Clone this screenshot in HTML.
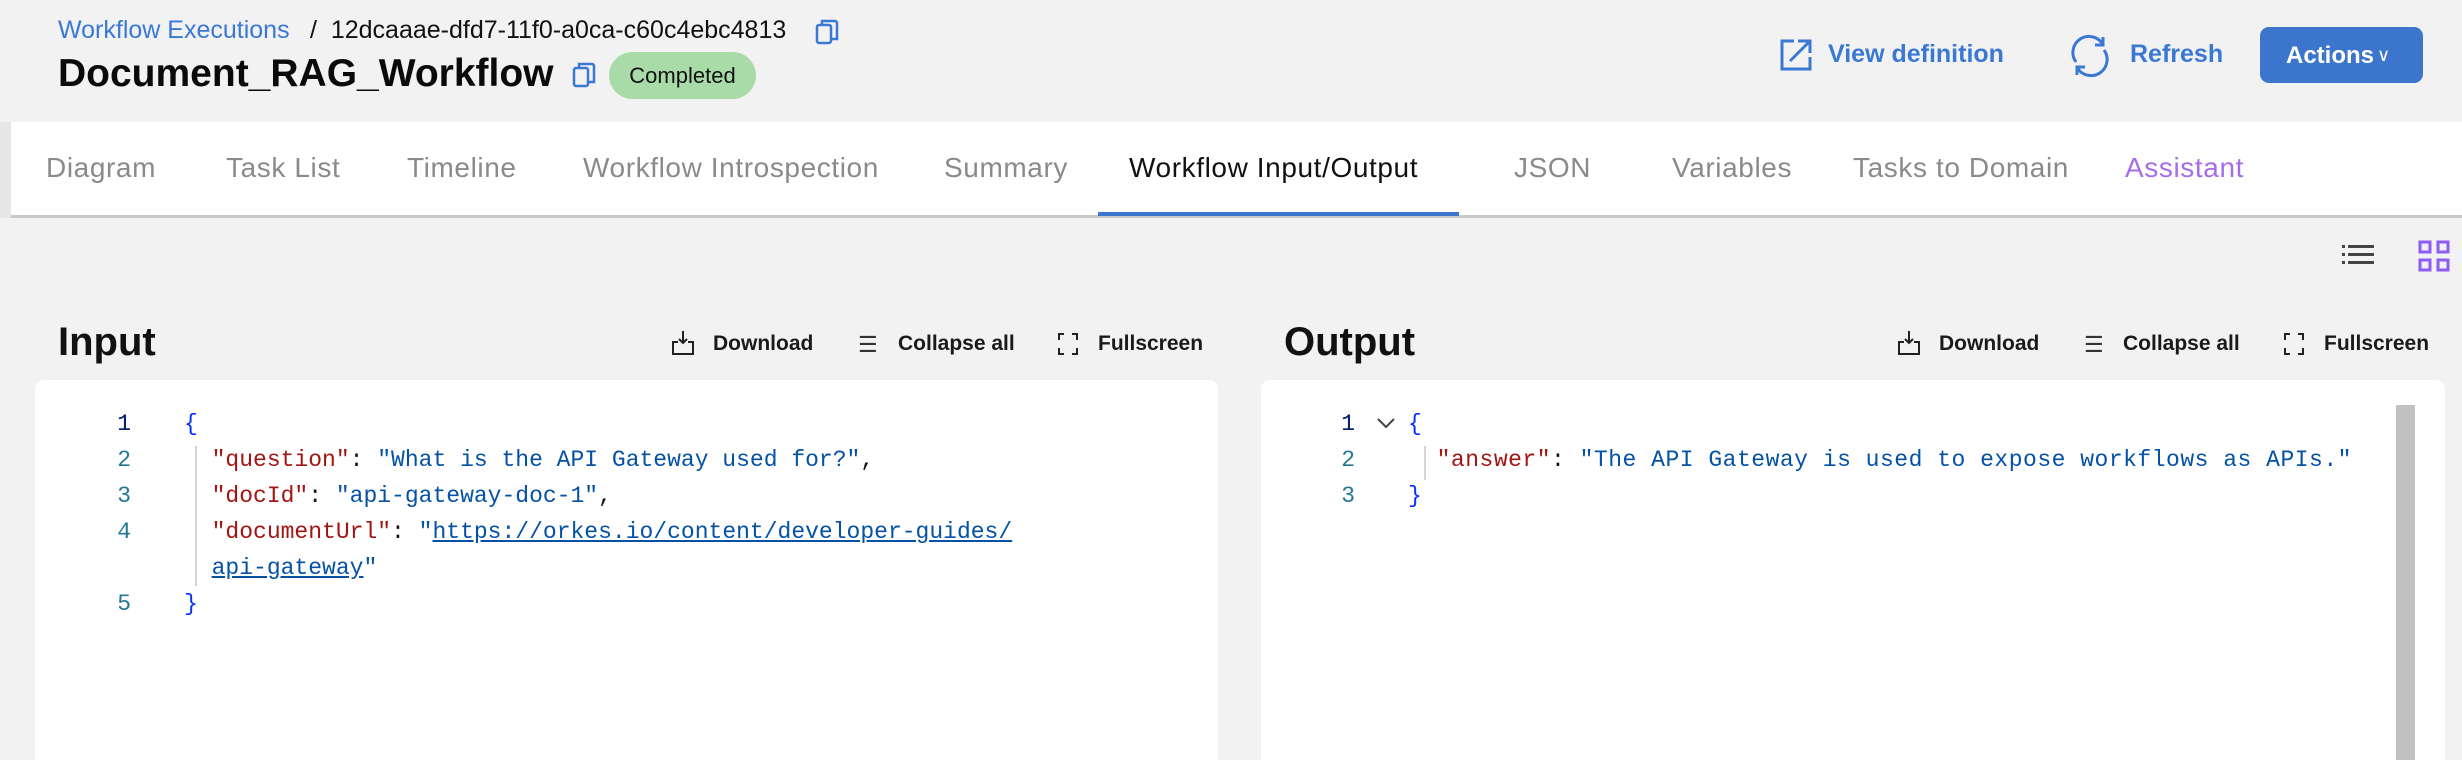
<!DOCTYPE html>
<html><head><meta charset="utf-8"><style>
*{margin:0;padding:0;box-sizing:border-box}
html,body{width:2462px;height:760px;overflow:hidden}
body{background:#f2f2f2;font-family:"Liberation Sans",sans-serif;position:relative;color:#111}
.a{position:absolute;white-space:nowrap}
.tab{position:absolute;top:152px;font-size:28px;letter-spacing:0.6px;color:#8a8a8a}
.tb{position:absolute;top:332px;font-size:21px;font-weight:bold;color:#1a1a1a}
.panel{position:absolute;top:380px;height:380px;background:#fff;border-radius:9px 9px 0 0}
.code{position:absolute;font-family:"Liberation Mono",monospace;font-size:23px;line-height:36px;white-space:pre}
.ln{color:#237893;text-align:right;width:40px}
.k{color:#a31515}.s{color:#0451a5}.b{color:#0431fa}
</style></head><body>
<div class="a" style="left:58px;top:16px;font-size:25px;color:#3a78d4">Workflow Executions</div>
<div class="a" style="left:310px;top:16px;font-size:25px;color:#111">/&nbsp;&nbsp;12dcaaae-dfd7-11f0-a0ca-c60c4ebc4813</div>
<svg class="a" style="left:813px;top:18px" width="30" height="30" viewBox="0 0 30 30" fill="none" stroke="#3a78d4" stroke-width="2.5"><rect x="4" y="7" width="14" height="18" rx="2"/><path d="M9 7V3h13a2 2 0 0 1 2 2v16h-6"/></svg>
<div class="a" style="left:58px;top:52px;font-size:39px;font-weight:bold;color:#0a0a0a">Document_RAG_Workflow</div>
<svg class="a" style="left:570px;top:61px" width="30" height="30" viewBox="0 0 30 30" fill="none" stroke="#3a78d4" stroke-width="2.5"><rect x="4" y="7" width="14" height="18" rx="2"/><path d="M9 7V3h13a2 2 0 0 1 2 2v16h-6"/></svg>
<div class="a" style="left:609px;top:52px;width:147px;height:47px;border-radius:24px;background:#a8dba8;font-size:22px;text-align:center;line-height:47px;color:#111">Completed</div>

<svg class="a" style="left:1778px;top:37px" width="36" height="36" viewBox="0 0 36 36" fill="none" stroke="#3a78d4" stroke-width="3"><path d="M16 4H4v28h28V20"/><path d="M12 24L31 5M20 4h12v12" /></svg>
<div class="a" style="left:1828px;top:40px;font-size:25px;font-weight:bold;color:#3a78d4">View definition</div>
<svg class="a" style="left:2068px;top:34px" width="44" height="44" viewBox="0 0 44 44" fill="none" stroke="#3a78d4" stroke-width="3"><path d="M8 28A15 15 0 0 1 34 9"/><path d="M36 16A15 15 0 0 1 10 35"/><path d="M35 3v8h-8M9 41v-8h8"/></svg>
<div class="a" style="left:2130px;top:40px;font-size:25px;font-weight:bold;color:#3a78d4">Refresh</div>
<div class="a" style="left:2260px;top:27px;width:163px;height:56px;border-radius:9px;background:#3b76cc;color:#fff;font-size:24px;font-weight:bold;line-height:56px;padding-left:26px">Actions<span style="font-size:18px;font-weight:normal;margin-left:3px;vertical-align:2px">∨</span></div>

<div class="a" style="left:11px;top:122px;width:2451px;height:96px;background:#fff;border-bottom:3px solid #c8c8c8"></div>
<div class="a" style="left:0;top:122px;width:11px;height:96px;background:#e6e6e6"></div>
<div class="tab" style="left:46px">Diagram</div>
<div class="tab" style="left:226px">Task List</div>
<div class="tab" style="left:407px">Timeline</div>
<div class="tab" style="left:583px">Workflow Introspection</div>
<div class="tab" style="left:944px">Summary</div>
<div class="tab" style="left:1129px;color:#111">Workflow Input/Output</div>
<div class="tab" style="left:1514px">JSON</div>
<div class="tab" style="left:1672px">Variables</div>
<div class="tab" style="left:1853px">Tasks to Domain</div>
<div class="tab" style="left:2125px;color:#a56ee8">Assistant</div>
<div class="a" style="left:1098px;top:212px;width:361px;height:4px;background:#3b76cc"></div>

<svg class="a" style="left:2342px;top:244px" width="32" height="22" viewBox="0 0 32 22" fill="#444"><rect x="0" y="1" width="3" height="3"/><rect x="6" y="1" width="26" height="3"/><rect x="0" y="9" width="3" height="3"/><rect x="6" y="9" width="26" height="3"/><rect x="0" y="17" width="3" height="3"/><rect x="6" y="17" width="26" height="3"/></svg>
<svg class="a" style="left:2418px;top:240px" width="32" height="32" viewBox="0 0 32 32" fill="none" stroke="#8b5cf6" stroke-width="3"><rect x="2" y="2" width="10" height="10"/><rect x="20" y="2" width="10" height="10"/><rect x="2" y="20" width="10" height="10"/><rect x="20" y="20" width="10" height="10"/></svg>

<div class="a" style="left:58px;top:320px;font-size:40px;font-weight:bold">Input</div>
<div class="a" style="left:1284px;top:320px;font-size:40px;font-weight:bold">Output</div>

<svg class="a" style="left:671px;top:330px" width="24" height="26" viewBox="0 0 24 26" fill="none" stroke="#222" stroke-width="2"><path d="M12 1v12M8 9l4 4 4-4M7 12H2v12h20V12h-5"/></svg>
<div class="tb" style="left:713px">Download</div>
<div class="a" style="left:858px;top:332px;font-size:22px;color:#333">☰</div>
<div class="tb" style="left:898px">Collapse all</div>
<svg class="a" style="left:1058px;top:333px" width="20" height="22" viewBox="0 0 20 22" fill="none" stroke="#222" stroke-width="2"><path d="M1 7V1h5M14 1h5v6M19 15v6h-5M6 21H1v-6"/></svg>
<div class="tb" style="left:1098px">Fullscreen</div>

<svg class="a" style="left:1897px;top:330px" width="24" height="26" viewBox="0 0 24 26" fill="none" stroke="#222" stroke-width="2"><path d="M12 1v12M8 9l4 4 4-4M7 12H2v12h20V12h-5"/></svg>
<div class="tb" style="left:1939px">Download</div>
<div class="a" style="left:2084px;top:332px;font-size:22px;color:#333">☰</div>
<div class="tb" style="left:2123px">Collapse all</div>
<svg class="a" style="left:2284px;top:333px" width="20" height="22" viewBox="0 0 20 22" fill="none" stroke="#222" stroke-width="2"><path d="M1 7V1h5M14 1h5v6M19 15v6h-5M6 21H1v-6"/></svg>
<div class="tb" style="left:2324px">Fullscreen</div>

<div class="panel" style="left:35px;width:1183px"></div>
<div class="panel" style="left:1261px;width:1184px"></div>

<div class="code ln" style="left:91px;top:406px">1
2
3
4

5</div>
<div class="code ln" style="left:91px;top:406px;color:#0b216f">1</div>
<div class="a" style="left:195px;top:446px;width:2px;height:140px;background:#d4d4d4"></div>
<div class="code" style="left:184px;top:406px"><span class="b">{</span>
  <span class="k">"question"</span>: <span class="s">"What is the API Gateway used for?"</span>,
  <span class="k">"docId"</span>: <span class="s">"api-gateway-doc-1"</span>,
  <span class="k">"documentUrl"</span>: <span class="s">"<u>https://orkes.io/content/developer-guides/</u></span>
  <span class="s"><u>api-gateway</u>"</span>
<span class="b">}</span></div>

<div class="code ln" style="left:1315px;top:406px">1
2
3</div>
<div class="code ln" style="left:1315px;top:406px;color:#0b216f">1</div>
<svg class="a" style="left:1376px;top:415px" width="20" height="16" viewBox="0 0 20 16" fill="none" stroke="#444" stroke-width="2"><path d="M2 4l8 8 8-8"/></svg>
<div class="a" style="left:1424px;top:446px;width:2px;height:34px;background:#d4d4d4"></div>
<div class="code" style="left:1408px;top:406px;letter-spacing:0.5px"><span class="b">{</span>
  <span class="k">"answer"</span>: <span class="s">"The API Gateway is used to expose workflows as APIs."</span>
<span class="b">}</span></div>
<div class="a" style="left:2396px;top:405px;width:19px;height:360px;background:#c1c1c1"></div>
</body></html>
